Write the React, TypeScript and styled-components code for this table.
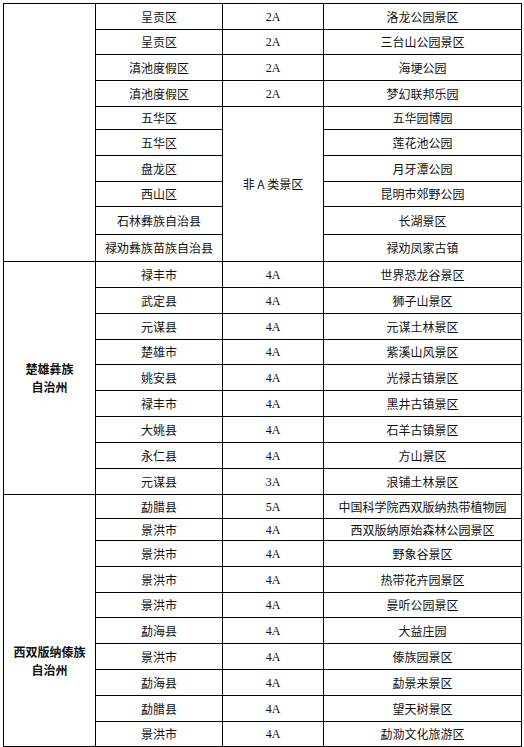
import React from 'react'
import styled, { createGlobalStyle } from 'styled-components'

interface IRow {
  county: string
  level?: string
  levelSpan?: number
  site: string
  height: number
}

interface ISection {
  region?: string[]
  regionShift?: number
  rows: IRow[]
}

const columnWidths = [92, 127, 101, 198]

const sections: ISection[] = [
  {
    rows: [
      { county: '呈贡区', level: '2A', site: '洛龙公园景区', height: 26 },
      { county: '呈贡区', level: '2A', site: '三台山公园景区', height: 25 },
      { county: '滇池度假区', level: '2A', site: '海埂公园', height: 26 },
      { county: '滇池度假区', level: '2A', site: '梦幻联邦乐园', height: 26 },
      { county: '五华区', level: '非 A 类景区', levelSpan: 6, site: '五华园博园', height: 23 },
      { county: '五华区', site: '莲花池公园', height: 26 },
      { county: '盘龙区', site: '月牙潭公园', height: 26 },
      { county: '西山区', site: '昆明市郊野公园', height: 25 },
      { county: '石林彝族自治县', site: '长湖景区', height: 28 },
      { county: '禄劝彝族苗族自治县', site: '禄劝凤家古镇', height: 27 },
    ],
  },
  {
    region: ['楚雄彝族', '自治州'],
    rows: [
      { county: '禄丰市', level: '4A', site: '世界恐龙谷景区', height: 26 },
      { county: '武定县', level: '4A', site: '狮子山景区', height: 26 },
      { county: '元谋县', level: '4A', site: '元谋土林景区', height: 26 },
      { county: '楚雄市', level: '4A', site: '紫溪山风景区', height: 25 },
      { county: '姚安县', level: '4A', site: '光禄古镇景区', height: 26 },
      { county: '禄丰市', level: '4A', site: '黑井古镇景区', height: 26 },
      { county: '大姚县', level: '4A', site: '石羊古镇景区', height: 26 },
      { county: '永仁县', level: '4A', site: '方山景区', height: 26 },
      { county: '元谋县', level: '3A', site: '浪铺土林景区', height: 26 },
    ],
  },
  {
    region: ['西双版纳傣族', '自治州'],
    regionShift: 80,
    rows: [
      { county: '勐腊县', level: '5A', site: '中国科学院西双版纳热带植物园', height: 24 },
      { county: '景洪市', level: '4A', site: '西双版纳原始森林公园景区', height: 22 },
      { county: '景洪市', level: '4A', site: '野象谷景区', height: 26 },
      { county: '景洪市', level: '4A', site: '热带花卉园景区', height: 26 },
      { county: '景洪市', level: '4A', site: '曼听公园景区', height: 25 },
      { county: '勐海县', level: '4A', site: '大益庄园', height: 26 },
      { county: '景洪市', level: '4A', site: '傣族园景区', height: 26 },
      { county: '勐海县', level: '4A', site: '勐景来景区', height: 26 },
      { county: '勐腊县', level: '4A', site: '望天树景区', height: 26 },
      { county: '景洪市', level: '4A', site: '勐泐文化旅游区', height: 25 },
    ],
  },
]

export default function App () {
  return (
    <>
      <GlobalStyle />
      <StyledPage>
        <StyledTable>
          <colgroup>
            {columnWidths.map((width, i) => <StyledCol key={i} $width={width} />)}
          </colgroup>
          {sections.map((section, s) => (
            <tbody key={s}>
              {section.rows.map((row, r) => (
                <StyledRow key={r} $height={row.height}>
                  {r === 0 && (
                    <StyledRegionCell rowSpan={section.rows.length} $shift={section.regionShift ?? 0}>
                      {section.region?.map(line => <div key={line}>{line}</div>)}
                    </StyledRegionCell>
                  )}
                  <StyledCell>{row.county}</StyledCell>
                  {row.level !== undefined && (
                    <StyledLevelCell rowSpan={row.levelSpan ?? 1} $latin={/^\dA$/.test(row.level)}>
                      {row.level}
                    </StyledLevelCell>
                  )}
                  <StyledCell>{row.site}</StyledCell>
                </StyledRow>
              ))}
            </tbody>
          ))}
        </StyledTable>
      </StyledPage>
    </>
  )
}

const GlobalStyle = createGlobalStyle`
  html, body {
    margin: 0;
    background: #fff;
  }
  body {
    font-family: "Noto Sans CJK SC", sans-serif;
    color: #111;
  }
`

const StyledPage = styled.div`
  padding: 3px 0 0 3px;
  width: 524px;
  height: 747px;
  box-sizing: border-box;
  overflow: hidden;
`

const StyledTable = styled.table`
  width: 518px;
  table-layout: fixed;
  border-collapse: collapse;
`

const StyledCol = styled.col<{ $width: number }>`
  width: ${({ $width }) => $width}px;
`

const StyledRow = styled.tr<{ $height: number }>`
  height: ${({ $height }) => $height}px;
`

const StyledCell = styled.td`
  border: 1px solid #000;
  padding: 0;
  text-align: center;
  vertical-align: middle;
  font-size: 12px;
  line-height: 14px;
  white-space: nowrap;
`

const StyledLevelCell = styled(StyledCell)<{ $latin: boolean }>`
  font-family: ${({ $latin }) => $latin ? '"Liberation Serif", "Noto Sans CJK SC", serif' : '"Noto Sans CJK SC", sans-serif'};
`

const StyledRegionCell = styled(StyledCell)<{ $shift: number }>`
  padding-top: ${({ $shift }) => $shift}px;
  font-weight: 700;
  line-height: 18px;
`
